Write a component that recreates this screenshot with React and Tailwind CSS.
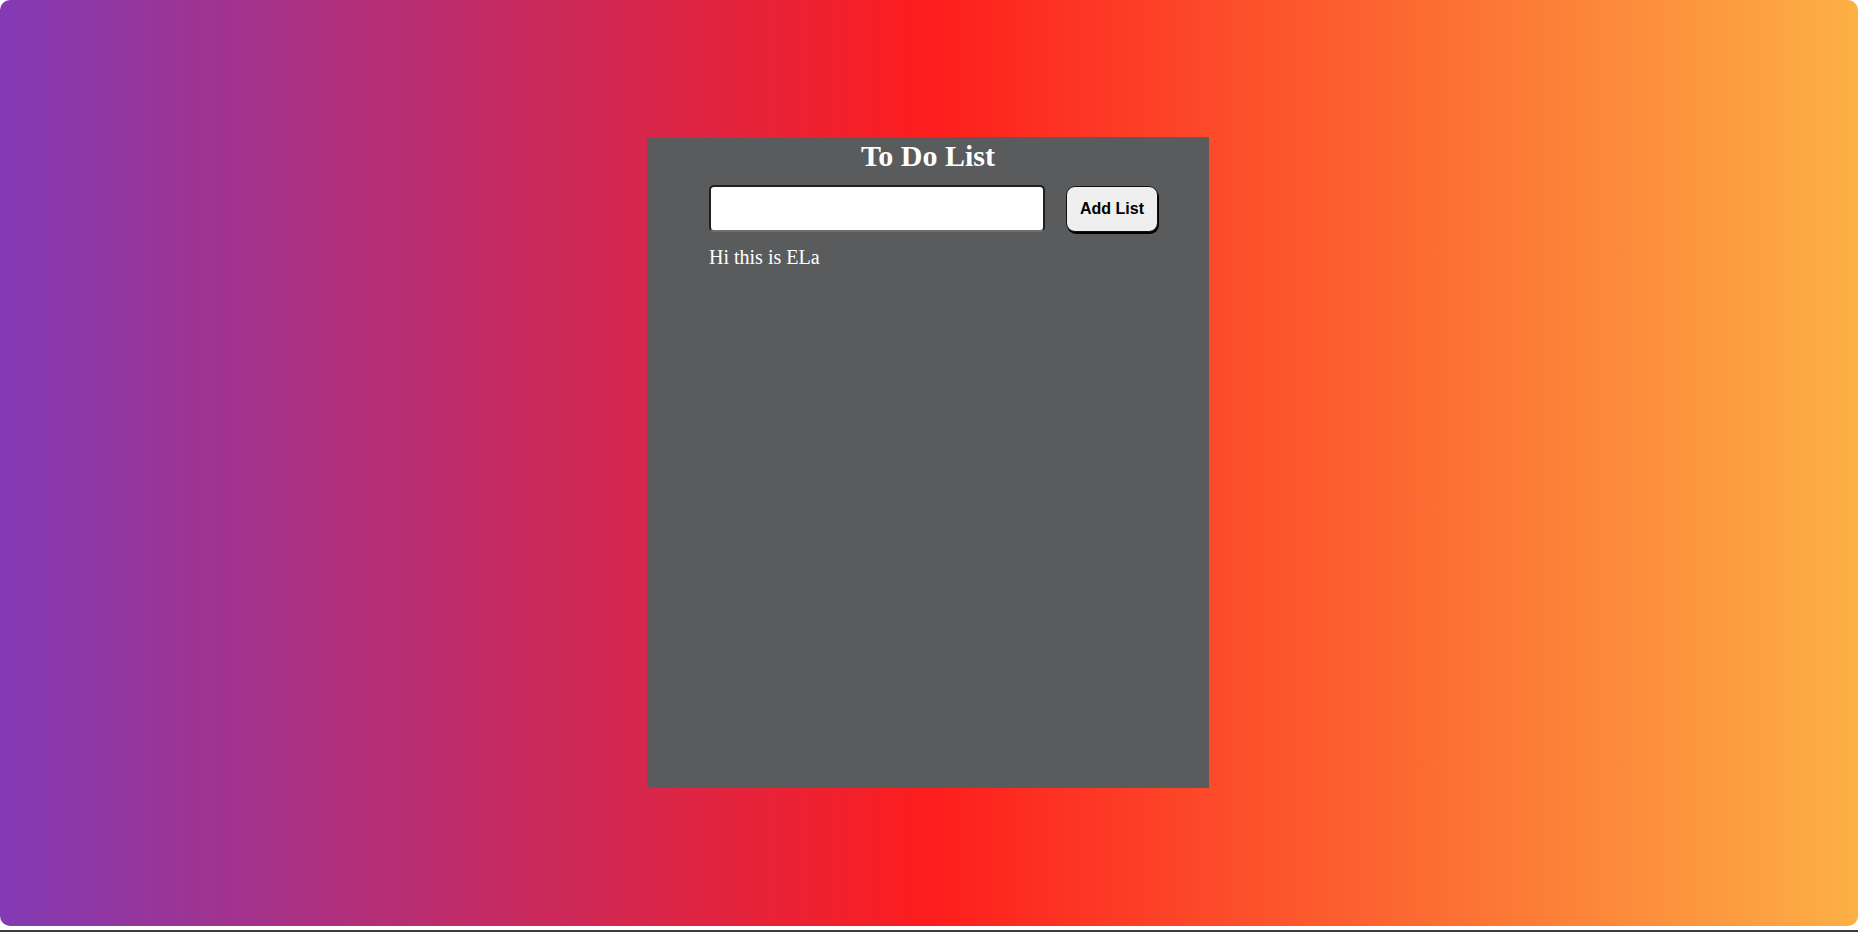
export default function App() {
  return (
    <div className="h-[932px] bg-white flex flex-col overflow-hidden">
      <div className="h-[926px] rounded-[10px] bg-linear-to-r/srgb from-[#833ab4] via-[#fd1d1d] to-[#fcb045] flex items-center justify-center">
        <div className="w-[562px] h-[651px] bg-[#5a5b5d] flex flex-col ml-[-2px] mt-[-1px]">
          <h1 className="text-center text-white font-bold text-[30px] leading-[33px] pt-[2px] font-['Liberation_Serif',serif]">
            To Do List
          </h1>
          <div className="flex items-center gap-[21px] pl-[62px] mt-[13px]">
            <input
              type="text"
              className="w-[336px] h-[47px] bg-white border-2 border-[#1f1f1f] border-b-[#6e6e6e] rounded-[5px] outline-none px-2"
            />
            <button className="w-[92px] h-[46px] bg-[#efefef] rounded-[9px] border border-[#111] shadow-[1px_2px_0_#000] text-black font-bold text-[16px] font-['Liberation_Sans',sans-serif]">
              Add List
            </button>
          </div>
          <ul className="pl-[62px] mt-[14px]">
            <li className="text-white text-[20px] leading-[23px] font-['Liberation_Serif',serif]">Hi this is ELa</li>
          </ul>
        </div>
      </div>
      <div className="flex-1" />
      <div className="h-[2px] bg-[#3c3c3c]" />
    </div>
  )
}
